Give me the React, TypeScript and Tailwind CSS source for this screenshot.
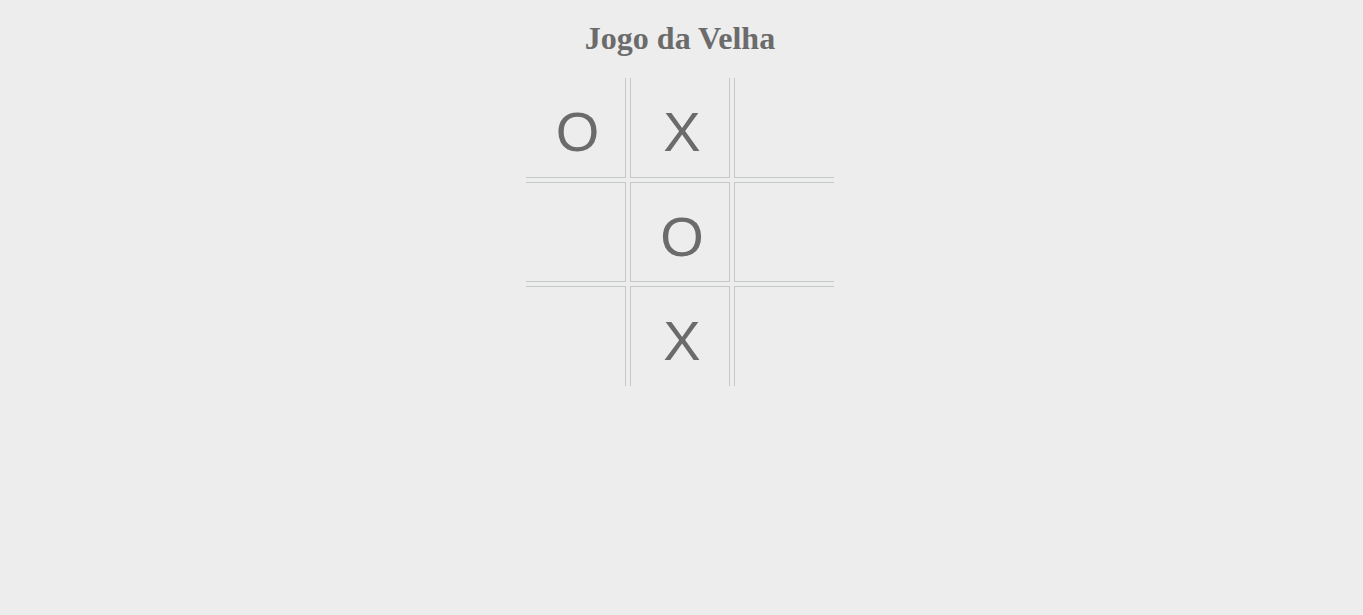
import React from 'react';

type Mark = 'X' | 'O' | '';

const board: Mark[] = ['O', 'X', '', '', 'O', '', '', 'X', ''];

// borders only on the inner sides, like the classic # board
const cellBorders = [
  'border-r border-b',
  'border-l border-r border-b',
  'border-l border-b',
  'border-t border-r border-b',
  'border',
  'border-t border-l border-b',
  'border-t border-r',
  'border-t border-l border-r',
  'border-t border-l',
];

export default function App() {
  return (
    <div className="min-h-screen bg-[#ededed] pr-[3px] text-[#6b6b6b]">
      <h1 className="pt-[20px] text-center text-[32px] font-bold leading-[37px] font-['Liberation_Serif',serif]">
        Jogo da Velha
      </h1>
      <div className="mx-auto mt-[21px] grid w-[308px] grid-cols-3 gap-1">
        {board.map((mark, i) => (
          <div
            key={i}
            className={`flex h-[100px] w-[100px] items-center justify-center border-[#c4c8c9] pl-1 pt-[9px] text-[56px] font-['Liberation_Sans',sans-serif] ${cellBorders[i]}`}
          >
            {mark}
          </div>
        ))}
      </div>
    </div>
  );
}
